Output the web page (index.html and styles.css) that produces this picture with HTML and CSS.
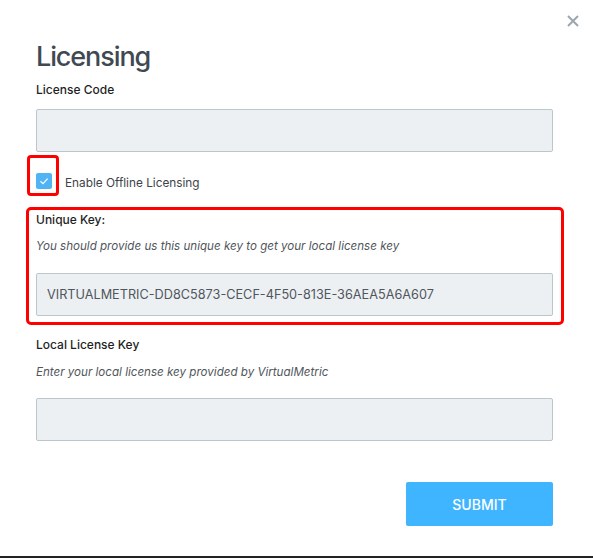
FILE: index.html
```html
<!DOCTYPE html>
<html>
<head>
<meta charset="utf-8">
<link rel="stylesheet" href="styles.css">
</head>
<body>
<div class="modal">
  <button class="close" aria-label="Close">
    <svg width="12" height="12" viewBox="0 0 12 12"><path d="M1 1L11 11M11 1L1 11" stroke="#9ba6ae" stroke-width="2" stroke-linecap="butt"/></svg>
  </button>
  <h1 class="title">Licensing</h1>
  <div class="label lbl-code">License Code</div>
  <div class="input in-code"></div>
  <div class="check-row">
    <span class="check">
      <svg width="16" height="16" viewBox="0 0 16 16"><path d="M4.5 8.3L7 10.6L11.6 5.6" fill="none" stroke="#fff" stroke-width="1.2"/></svg>
      <span class="highlight"></span>
    </span>
    <span class="check-text">Enable Offline Licensing</span>
  </div>
  <div class="unique">
    <div class="label lbl-unique">Unique Key:</div>
    <div class="hint hint-unique">You should provide us this unique key to get your local license key</div>
    <div class="input in-key">VIRTUALMETRIC-DD8C5873-CECF-4F50-813E-36AEA5A6A607</div>
  </div>
  <div class="label lbl-local">Local License Key</div>
  <div class="hint hint-local">Enter your local license key provided by VirtualMetric</div>
  <div class="input in-local"></div>
  <div class="actions">
    <button class="submit">SUBMIT</button>
  </div>
</div>
</body>
</html>
```
FILE: styles.css
```css
html, body {
  margin: 0;
  padding: 0;
  background: #fff;
}
.modal {
  position: relative;
  width: 593px;
  height: 558px;
  box-sizing: border-box;
  padding: 40px 40px 0 36px;
  border-bottom: 2px solid #232323;
  font-family: "Inter", "Open Sans", sans-serif;
  background: #fff;
}
.close {
  position: absolute;
  top: 15px;
  right: 14px;
  width: 12px;
  height: 12px;
  padding: 0;
  border: 0;
  background: none;
  display: block;
}
.close svg { display: block; }
.title {
  margin: 0;
  font-size: 27px;
  line-height: 33px;
  font-weight: 500;
  color: #3e4952;
  letter-spacing: -1.1px;
}
.label {
  font-size: 12px;
  line-height: 16px;
  font-weight: 500;
  color: #1f1f1f;
}
.lbl-code { margin-top: 9px; }
.input {
  height: 43px;
  box-sizing: border-box;
  border: 1px solid #bcc6cd;
  border-radius: 2px;
  background: #edf0f3;
  font-size: 12.7px;
  color: #4f565c;
  display: flex;
  align-items: center;
  padding: 0 10px;
}
.in-code { margin-top: 11px; }
.check-row {
  margin-top: 21px;
  height: 16px;
  display: flex;
  align-items: center;
  gap: 13px;
}
.check {
  position: relative;
  width: 16px;
  height: 16px;
  border-radius: 2px;
  background: #4fb3f4;
  flex: none;
}
.check svg { display: block; }
.highlight {
  position: absolute;
  left: -9px;
  top: -18px;
  width: 26px;
  height: 35px;
  border: 3px solid #ff0000;
  border-radius: 4px;
}
.check-text {
  font-size: 11.8px;
  color: #3d4349;
  margin-top: 3px;
}
.unique {
  margin: 18px -11px 0 -10px;
  padding: 2px 8px 6px 7px;
  border: 3px solid #ff0000;
  border-radius: 5px;
}
.hint {
  font-size: 11.6px;
  line-height: 16px;
  font-style: italic;
  color: #50565b;
}
.hint-unique { margin-top: 10px; }
.in-key { margin-top: 19px; }
.lbl-local { margin-top: 12px; }
.hint-local { margin-top: 11px; }
.in-local { margin-top: 18px; }
.actions {
  margin-top: 41px;
  display: flex;
  justify-content: flex-end;
}
.submit {
  width: 147px;
  height: 44px;
  border: 0;
  border-radius: 2px;
  background: #40b5ff;
  color: #fff;
  font-family: inherit;
  font-size: 14px;
  font-weight: 500;
}
```
